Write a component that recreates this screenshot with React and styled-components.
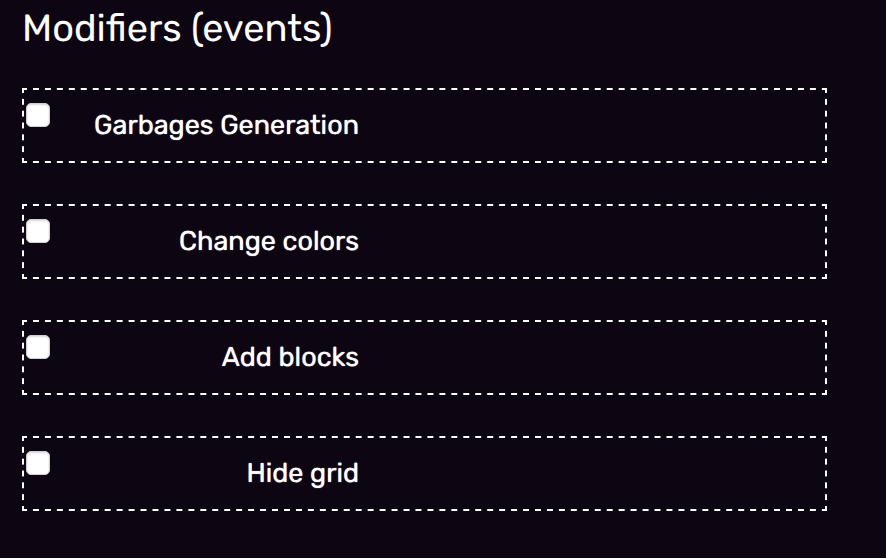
import React from "react";
import styled, { createGlobalStyle } from "styled-components";

const GlobalStyle = createGlobalStyle`
  * { box-sizing: border-box; }
  body {
    margin: 0;
    background: #0d0512;
    color: #fff;
    font-family: Rubik, Roboto, "Open Sans", sans-serif;
    text-rendering: geometricPrecision;
  }
`;

const Page = styled.main`
  padding: 4px 59px 46px 22px;
`;

const Title = styled.h1`
  margin: 0 0 36px;
  font-size: 38px;
  font-weight: 400;
  line-height: 48px;
`;

const ModifierList = styled.div`
  display: grid;
  gap: 41px;
`;

/* Evenly spaced 6px dashes, centred on the corners of the frame. */
const ModifierRow = styled.div`
  --across: linear-gradient(90deg, #fff 25%, transparent 25% 75%, #fff 75%);
  --down: linear-gradient(#fff 25%, transparent 25% 75%, #fff 75%);
  display: flex;
  align-items: flex-start;
  min-height: 75px;
  padding: 13px 2px;
  border: 2px solid transparent;
  background-image: var(--across), var(--across), var(--down), var(--down);
  background-size: 12px 2px, 12px 2px, 2px 12px, 2px 12px;
  background-position: 0 -2px, 0 calc(100% + 2px), -2px 0, calc(100% + 2px) 0;
  background-repeat: round no-repeat, round no-repeat, no-repeat round, no-repeat round;
  background-origin: padding-box;
  background-clip: border-box;
`;

const Checkbox = styled.input`
  appearance: none;
  flex: none;
  width: 24px;
  height: 24px;
  margin: 0;
  border: 1px solid #d0ced2;
  border-radius: 5px;
  background: #fff;
  box-shadow: inset 0 1px 2px #d8d6da;

  &:checked {
    background: #3478f6;
  }
`;

const ModifierLabel = styled.label`
  width: 309px;
  padding-top: 6px;
  font-size: 27px;
  font-weight: 400;
  line-height: 32px;
  text-align: right;
  text-shadow: 0 0 1px #fff;
`;

const modifiers = [
  { id: "garbages", label: "Garbages Generation" },
  { id: "colors", label: "Change colors" },
  { id: "blocks", label: "Add blocks" },
  { id: "grid", label: "Hide grid" },
];

export default function App() {
  return (
    <Page>
      <GlobalStyle />
      <Title>Modifiers (events)</Title>
      <ModifierList>
        {modifiers.map(({ id, label }) => (
          <ModifierRow key={id}>
            <Checkbox type="checkbox" id={id} />
            <ModifierLabel htmlFor={id}>{label}</ModifierLabel>
          </ModifierRow>
        ))}
      </ModifierList>
    </Page>
  );
}
